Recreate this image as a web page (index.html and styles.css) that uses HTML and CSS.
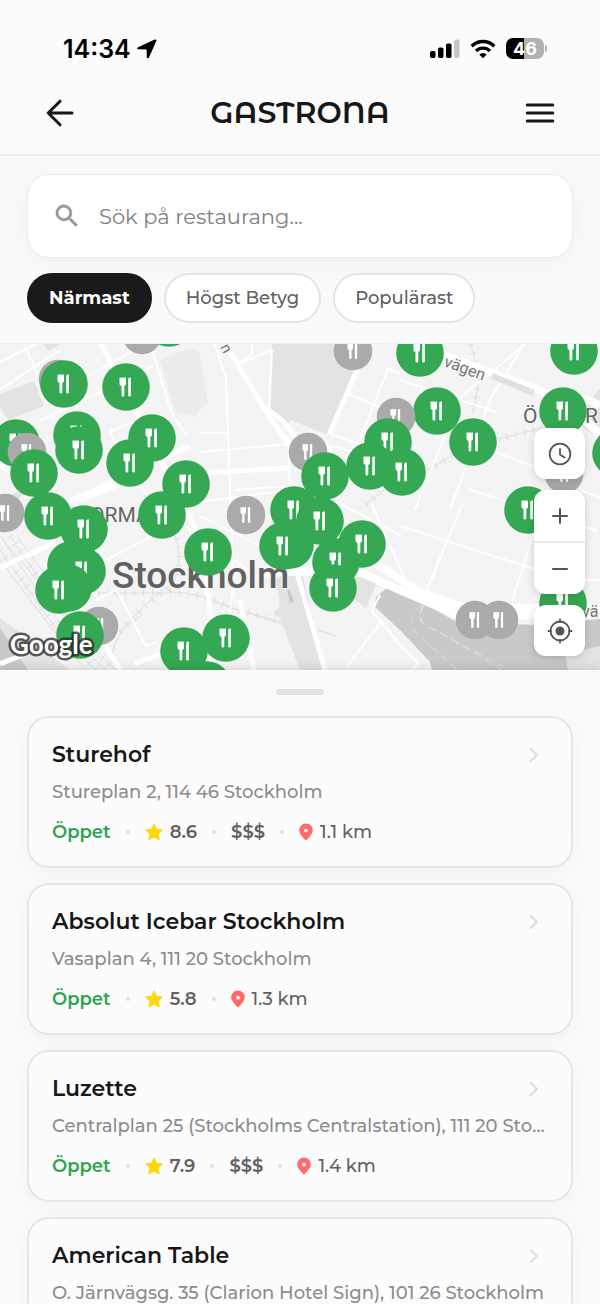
FILE: index.html
```html
<!DOCTYPE html>
<html lang="sv">
<head>
<meta charset="utf-8">
<meta name="viewport" content="width=device-width, initial-scale=1">
<title>Gastrona</title>
<link rel="stylesheet" href="styles.css">
</head>
<body>
<div class="app">
  <div class="status-bar">
    <div class="status-time">14:34
      <svg width="20" height="20" viewBox="0 0 20 20" aria-hidden="true"><path d="M1 8.200 17.800.6c1-.4 1.800.3 1.500 1.300L12 18.500c-.5 1.200-2.100 1-2.200-.3L9.600 10.400 1.500 10.300C0 10.200-.2 8.800 1 8.200z"/></svg>
    </div>
    <div class="status-icons">
      <svg width="30" height="20" viewBox="0 0 30 20" aria-hidden="true"><rect x="0" y="12" width="5.500" height="7" rx="1.700"/><rect x="8" y="8.500" width="5.500" height="10.500" rx="1.700"/><rect x="16" y="4.500" width="5.500" height="14.500" rx="1.700"/><rect x="24" y="0.500" width="5.500" height="18.500" rx="1.700" fill="#c8c8c8"/></svg>
      <svg width="26" height="20" viewBox="0 0 26 20" aria-hidden="true"><g fill="none" stroke="#000" stroke-width="3.400"><path d="M1.700 7.200a16 16 0 0 1 22.600 0"/><path d="M6 12a10 10 0 0 1 14 0"/></g><path d="M13 19.300 9.300 15.500a5.300 5.300 0 0 1 7.400 0z"/></svg>
      <span class="battery">46</span>
    </div>
  </div>

  <header class="header">
    <button class="icon-button" type="button" aria-label="Tillbaka">
      <svg width="30" height="30" viewBox="0 0 30 30" aria-hidden="true"><path d="M27 15H3.500M15 3.200 3.200 15 15 26.800" fill="none" stroke="#171717" stroke-width="3" stroke-linecap="round" stroke-linejoin="round"/></svg>
    </button>
    <h1 class="brand">GASTRONA</h1>
    <button class="icon-button" type="button" aria-label="Meny">
      <svg width="30" height="30" viewBox="0 0 30 30" aria-hidden="true"><path d="M2.300 7h25.500M2.300 15h25.500M2.300 23h25.500" stroke="#171717" stroke-width="3" stroke-linecap="round"/></svg>
    </button>
  </header>

  <section class="filters">
    <label class="search">
      <svg width="30" height="30" viewBox="0 0 24 24" aria-label="Sök"><path fill="#979797" stroke="#979797" stroke-width=".3" d="M15.500 14h-.79l-.28-.27A6.470 6.470 0 0 0 16 9.500 6.500 6.500 0 1 0 9.500 16c1.610 0 3.090-.59 4.230-1.570l.27.28v.79l5 4.990L20.490 19l-4.990-5zm-6 0a4.500 4.500 0 1 1 0-9 4.500 4.500 0 0 1 0 9z"/></svg>
      <input class="search-input" type="text" placeholder="Sök på restaurang...">
    </label>
    <div class="chips">
      <button class="chip chip-active" type="button">Närmast</button>
      <button class="chip" type="button">Högst Betyg</button>
      <button class="chip" type="button">Populärast</button>
    </div>
  </section>

  <section class="map">
    <svg class="map-canvas" viewBox="0 344 600 326" preserveAspectRatio="xMidYMid slice" role="img" aria-label="Karta över Stockholm">
      <defs>
        <g id="cutlery" fill="#fff">
          <path d="M-6.500-9.500h6.500v6.500q0 1.700-1.700 1.700V8.200q0 1.300-1.400 1.300T-4.500 8.200V-1.300Q-6.500-1.300-6.500-3z"/>
          <path d="M2.200-8q0-1.500 1.500-1.500h1.200V8.200q0 1.300-1.300 1.300T2.200 8.200z"/>
          <path d="M-4.700-9.600v1.200M-2-9.600v1.200" stroke="#34a853" stroke-opacity=".5" stroke-width=".7"/>
        </g>
        <g id="open"><circle r="23.800" fill="#34a853"/><use href="#cutlery"/></g>
        <g id="closed"><circle r="19.300" fill="#aaa"/><use href="#cutlery" transform="scale(.85)"/></g>
      </defs>

      <path class="land" d="M0 344h600v326H0z"/>
      <path class="park" d="M272 344h88l-3 26-18 48-9 18-39-16-6 7-19-16 5-5z"/>
      <path class="block" d="m160 360 30-12 10 5 8 51-10 7-1 6-12-3-9 0z"/>
      <path class="park" d="m0 394 34-13 10 25-36 14-8-14zM43 344h18l-13 7z"/>
      <path class="block" d="M200 363q4 8 7 37l-7 2z"/>
      <path class="park" d="m275 574 28 2 22 94h-25l-20-52-7-4 7-8zM352 570l26 10-12 28-14-10zM590 400l10-12v50l-24-14z"/>
      <path class="park" d="M0 500l28-13-18 23zM0 618l70 52H0z"/>
      <path class="water" d="M0 628l28 42H0zM287 590l3 0 4 12-4 1z"/>
      <path class="water" d="M376 597l11-9 13 2 55 31 80 4 65-6v51H432l-2-8-30-32-25-23z"/>
      <path class="park" d="M565 654l35-8v24h-32z"/>

      <g class="rail">
        <path d="M0 550 60 634 96 670M4 542l64 93 38 35M10 536l64 94 42 40M0 560l50 66 36 44M18 538l60 80M0 536 100 655"/>
        <path d="M98 593h70q18-30 7-58M170 592q30 0 60 16l60 16M215 602l70 23M120 632q30-35 55-50M112 655q4-26 30-40"/>
        <path d="M471 344l8 36-6 34M498 439l60-15M428 470l30-18M366 504l26-20M318 630l18 6"/>
      </g>
      <g class="rail rail-wide">
        <path d="M0 550 60 634 96 670M10 536l64 94 42 40M98 593h70q18-30 7-58M170 592q30 0 60 16l60 16M120 632q30-35 55-50"/>
        <path d="M471 344l8 36-6 34M498 439l60-15M428 470l30-18M366 504l26-20"/>
      </g>

      <g class="road thin">
        <path d="M0 390 60 350M0 362l36-18M24 344l28 60M40 421l113-55M60 392l78-44M52 420l20-46M110 431l40-16M110 431l13 28M150 344l22 70 14 20M215 344l11 34 8 220M200 433h30M200 452l90-8M200 502l90-12M234 490l56-4M252 344v10l-14 10 34-14M272 350l-3 60M288 436l2 52M345 475l-17-30 30 8M348 394l32 13M330 434l28 10 30-75 12 4M415 510l45-112 65-54M450 510l40-110 34-56M400 380l96 32M484 448l60 22M468 489l130 42M400 526l150 48M427 590l35-85M512 602l30-95M560 580h40M580 490l20 8M346 668l36-48M122 458l30 44 110 78M104 561l90-47M96 600l20-10 6 10 24 46 10-4 12 20M234 580l-10 80M342 505l58 30M372 505l40 90M280 505l15 60M200 516l60 30M380 595l-8 16 28 34 18 18-6 7"/>
      </g>
      <g class="road">
        <path d="M101 344l100 195 9 70 2 61M0 465l20 14M0 568l56-26M60 506l130-60M80 500l70-28M200 473l88-5M230 352l38 63 35 48M357 370l-28 65M240 600l14 70M297 573l28 97M90 620l30 50M134 664l40-15M0 664l30-12"/>
        <path d="M266 408l18 14 20 27"/>
      </g>
      <g class="road wide">
        <path d="M430 350l60 22 70 26 40 36M262 573l60-2 40 2 40 18 60 26 140-4"/>
        <path d="M360 553l60 39 45 16h135M560 404q20-12 40 2"/>
      </g>
      <path d="m492 376 42 17" stroke="#e0e0e0" stroke-width="6"/>
      <path class="ferry" d="M422 605q-18 14-4 30l42 37M423 605q-8 16 4 21l90 48M424 605q-10 20 12 25l66 40"/>

      <g class="label">
        <text x="112" y="588" font-size="37" font-weight="500" fill="#616161">Stockholm</text>
        <text x="90" y="522" font-size="21">ORMALM</text>
        <text x="523" y="423" font-size="21">Ö</text>
        <text x="585" y="423" font-size="21">R</text>
        <text font-size="16" fill="#777" transform="translate(443 366) rotate(20)">vägen</text>
        <text x="582" y="617" font-size="16" fill="#777">vä</text>
        <text font-size="15" fill="#777" transform="translate(220 347) rotate(62)">n</text>
      </g>

      <g>
        <use href="#open" x="169" y="323"/><use href="#closed" x="142" y="335"/>
        <use href="#closed" x="353" y="351"/><use href="#open" x="420" y="353"/><use href="#open" x="574" y="351"/>
        <use href="#closed" x="58" y="379"/><use href="#open" x="64" y="384"/><use href="#open" x="126" y="387"/>
        <use href="#open" x="437" y="411"/><use href="#open" x="563" y="411"/><use href="#closed" x="396" y="417"/>
        <use href="#open" x="77" y="435"/><use href="#open" x="152" y="438"/><use href="#open" x="388" y="442"/><use href="#open" x="473" y="442"/>
        <use href="#open" x="16" y="443"/><use href="#open" x="79" y="450"/><use href="#closed" x="27" y="452"/><use href="#closed" x="308" y="452"/><use href="#open" x="616" y="453"/>
        <use href="#open" x="130" y="463"/><use href="#open" x="370" y="466"/><use href="#open" x="402" y="472"/><use href="#open" x="34" y="473"/>
        <use href="#closed" x="564" y="474"/><use href="#open" x="325" y="476"/><use href="#open" x="186" y="484"/>
        <use href="#open" x="294" y="510"/><use href="#open" x="528" y="510"/><use href="#closed" x="5" y="513"/><use href="#open" x="162" y="515"/><use href="#closed" x="246" y="515"/>
        <use href="#open" x="48" y="516"/><use href="#open" x="320" y="521"/><use href="#open" x="84" y="529"/><use href="#open" x="362" y="544"/>
        <circle cx="290" cy="545" r="23.800" fill="#34a853"/><use href="#open" x="283" y="546"/><use href="#open" x="208" y="552"/>
        <use href="#open" x="336" y="562"/><circle cx="71" cy="565" r="23.800" fill="#34a853"/><use href="#open" x="82" y="571"/><use href="#open" x="333" y="588"/>
        <circle cx="68" cy="588" r="23.800" fill="#34a853"/><use href="#open" x="59" y="590"/><use href="#open" x="563" y="603"/>
        <use href="#closed" x="475" y="620"/><use href="#closed" x="499" y="620"/><use href="#closed" x="99" y="626"/><use href="#open" x="80" y="635"/>
        <use href="#open" x="226" y="638"/><use href="#open" x="184" y="651"/><use href="#open" x="207" y="685"/>
      </g>
      <text class="map-logo" x="10" y="654">Google</text>
    </svg>

    <div class="map-controls">
      <button class="map-button" type="button" aria-label="Öppettider">
        <svg width="26" height="26" viewBox="0 0 26 26" aria-hidden="true"><g fill="none" stroke="#555" stroke-width="1.800" stroke-linecap="round" stroke-linejoin="round"><circle cx="13" cy="13" r="10.300"/><path d="M13 8v5.500l4.500 3"/></g></svg>
      </button>
      <div class="zoom-group">
        <button class="map-button" type="button" aria-label="Zooma in">
          <svg width="26" height="26" viewBox="0 0 26 26" aria-hidden="true"><path d="M6 13h14M13 6v14" stroke="#555" stroke-width="2" stroke-linecap="round"/></svg>
        </button>
        <button class="map-button" type="button" aria-label="Zooma ut">
          <svg width="26" height="26" viewBox="0 0 26 26" aria-hidden="true"><path d="M6 13h14" stroke="#555" stroke-width="2" stroke-linecap="round"/></svg>
        </button>
      </div>
      <button class="map-button" type="button" aria-label="Min position">
        <svg width="26" height="26" viewBox="0 0 26 26" aria-hidden="true"><g fill="none" stroke="#555" stroke-width="1.800" stroke-linecap="round"><circle cx="13" cy="13" r="9.500"/><path d="M13 1.500V4M13 22v2.500M1.500 13H4M22 13h2.500"/></g><circle cx="13" cy="13" r="4.500" fill="#555"/></svg>
      </button>
    </div>
  </section>

  <main class="sheet">
    <div class="handle"></div>
    <svg class="symbols" aria-hidden="true">
      <symbol id="star" viewBox="0 0 18 18"><path fill="#ffd60a" stroke="#ffd60a" stroke-linejoin="round" d="m9 1 2.500 5.300 5.900.7-4.400 4 1.200 5.900L9 14l-5.200 2.900L5 11 .6 7l5.900-.7z"/></symbol>
      <symbol id="pin" viewBox="0 0 14 18"><path fill="#ff6b6b" fill-rule="evenodd" d="M7 .5a6.800 6.800 0 0 0-6.800 6.800C.2 11.800 7 17.600 7 17.600s6.800-5.800 6.800-10.300A6.800 6.800 0 0 0 7 .5zm0 5.200a1.900 1.900 0 1 1 0 3.800 1.900 1.900 0 0 1 0-3.800z"/></symbol>
      <symbol id="chevron" viewBox="0 0 10 16"><path d="m1.700 2 6.300 6-6.300 6" fill="none" stroke="#dedede" stroke-width="2.200" stroke-linecap="round" stroke-linejoin="round"/></symbol>
    </svg>

    <article class="card">
      <div class="card-top"><h2 class="name">Sturehof</h2><svg class="chevron"><use href="#chevron"/></svg></div>
      <p class="address">Stureplan 2, 114 46 Stockholm</p>
      <div class="meta"><span class="status-open">Öppet</span><i class="dot"></i><span class="rating"><svg class="star"><use href="#star"/></svg>8.6</span><i class="dot"></i><span class="price">$$$</span><i class="dot"></i><span class="distance"><svg class="pin"><use href="#pin"/></svg>1.1 km</span></div>
    </article>
    <article class="card">
      <div class="card-top"><h2 class="name">Absolut Icebar Stockholm</h2><svg class="chevron"><use href="#chevron"/></svg></div>
      <p class="address">Vasaplan 4, 111 20 Stockholm</p>
      <div class="meta"><span class="status-open">Öppet</span><i class="dot"></i><span class="rating"><svg class="star"><use href="#star"/></svg>5.8</span><i class="dot"></i><span class="distance"><svg class="pin"><use href="#pin"/></svg>1.3 km</span></div>
    </article>
    <article class="card">
      <div class="card-top"><h2 class="name">Luzette</h2><svg class="chevron"><use href="#chevron"/></svg></div>
      <p class="address">Centralplan 25 (Stockholms Centralstation), 111 20 Stockholm</p>
      <div class="meta"><span class="status-open">Öppet</span><i class="dot"></i><span class="rating"><svg class="star"><use href="#star"/></svg>7.9</span><i class="dot"></i><span class="price">$$$</span><i class="dot"></i><span class="distance"><svg class="pin"><use href="#pin"/></svg>1.4 km</span></div>
    </article>
    <article class="card">
      <div class="card-top"><h2 class="name">American Table</h2><svg class="chevron"><use href="#chevron"/></svg></div>
      <p class="address">O. Järnvägsg. 35 (Clarion Hotel Sign), 101 26 Stockholm</p>
    </article>
  </main>
</div>
</body>
</html>
```
FILE: styles.css
```css
* { box-sizing: border-box; }
body {
  margin: 0;
  background: #fbfbfb;
  color: #171717;
  font-family: Montserrat, Inter, "Liberation Sans", sans-serif;
}
button { font: inherit; padding: 0; border: 0; cursor: pointer; }
h1, h2, p { margin: 0; }
svg { display: block; flex: none; }

.app { display: flex; flex-direction: column; height: 100vh; overflow: hidden; }

.status-bar {
  flex: none;
  display: flex;
  align-items: center;
  justify-content: space-between;
  height: 72px;
  padding: 25px 56px 0 63px;
  color: #000;
  font-family: Inter, sans-serif;
}
.status-time { display: flex; align-items: center; gap: 6px; font-size: 25px; font-weight: 600; line-height: 30px; }
.status-icons { display: flex; align-items: center; gap: 10px; }
.battery {
  position: relative;
  width: 38px;
  border-radius: 7px;
  background: linear-gradient(90deg, #000 47%, #b1b1b1 47%);
  color: #fff;
  font-size: 18px;
  font-weight: 700;
  line-height: 21px;
  text-align: center;
}
.battery::after {
  content: "";
  position: absolute;
  left: 39px;
  top: 7px;
  width: 2px;
  height: 7px;
  border-radius: 0 3px 3px 0;
  background: #b1b1b1;
}

.header {
  flex: none;
  display: flex;
  align-items: center;
  justify-content: space-between;
  height: 84px;
  padding: 0 45px;
  border-bottom: 2px solid #f0f0f0;
}
.icon-button { background: none; }
.brand { font-family: "Montserrat Alternates", Montserrat, Inter, sans-serif; font-size: 30px; font-weight: 600; line-height: 40px; }

.filters { flex: none; padding: 18px 27px 20px; background: #fafafa; border-bottom: 1px solid #ececec; }
.search {
  display: flex;
  align-items: center;
  gap: 17px;
  height: 84px;
  padding: 0 24px;
  border: 1px solid #ebebeb;
  border-radius: 22px;
  background: #fff;
  box-shadow: 0 4px 22px rgba(0, 0, 0, .04);
}
.search-input { flex: 1; min-width: 0; border: 0; padding: 2px 0 0; outline: 0; background: none; font: inherit; font-size: 21px; line-height: 30px; color: #171717; }
.search-input::placeholder { color: #808080; opacity: 1; }
.chips { display: flex; gap: 12px; margin-top: 15px; }
.chip { height: 50px; padding: 0 20px; border: 2px solid #e5e5e5; border-radius: 25px; background: #fff; color: #616161; font-size: 18px; font-weight: 500; }
.chip-active { border-color: #1a1a1a; background: #1a1a1a; color: #fff; font-weight: 700; }

.map { flex: none; position: relative; }
.map-canvas { width: 100%; height: 326px; }
.land { fill: #f4f4f4; }
.park { fill: #e3e3e3; }
.block { fill: #ececec; }
.water { fill: #c9c9c9; }
.rail { fill: none; stroke: #dfdfdf; stroke-width: 1; }
.rail-wide { stroke-width: 7; stroke-dasharray: 1 8; }
.road { fill: none; stroke: #fff; stroke-width: 5; }
.thin { stroke-width: 2; }
.wide { stroke-width: 8; }
.ferry { fill: none; stroke: #dedede; stroke-width: 1; stroke-dasharray: 9 4; }
.label { font-family: Roboto, sans-serif; fill: #666; stroke: #f4f4f4; stroke-width: 2px; paint-order: stroke; }
.map-logo { font-family: Lato, sans-serif; font-size: 26px; font-weight: 700; fill: #fff; stroke: rgba(40, 40, 40, .75); stroke-width: 5px; stroke-linejoin: round; paint-order: stroke; }
.map-controls { position: absolute; top: 84px; right: 15px; display: flex; flex-direction: column; gap: 11px; }
.map-button { display: grid; place-items: center; width: 51px; height: 51px; border-radius: 12px; background: #fff; box-shadow: 0 2px 8px rgba(0, 0, 0, .16); }
.zoom-group { display: grid; gap: 2px; border-radius: 12px; overflow: hidden; background: #ebebeb; box-shadow: 0 2px 8px rgba(0, 0, 0, .16); }
.zoom-group .map-button { border-radius: 0; box-shadow: none; }

.sheet {
  position: relative;
  flex: 1;
  min-height: 0;
  display: flex;
  flex-direction: column;
  gap: 15px;
  padding: 19px 27px;
  overflow-y: auto;
  scrollbar-width: none;
  background: #fbfbfb;
  box-shadow: 0 0 10px rgba(0, 0, 0, .16);
}
.handle { flex: none; align-self: center; width: 48px; height: 6px; margin-bottom: 6px; border-radius: 3px; background: #e2e2e2; }
.symbols { position: absolute; width: 0; height: 0; }
.card { flex: none; padding: 20px 24px 20px 23px; border: 2px solid #e6e6e6; border-radius: 22px; background: #fcfcfc; box-shadow: 0 4px 20px rgba(0, 0, 0, .04); }
.card-top { display: flex; align-items: center; justify-content: space-between; padding-right: 8px; }
.name { font-size: 22px; font-weight: 600; line-height: 34px; }
.chevron { width: 10px; height: 16px; }
.address { margin-top: 6px; color: #8c8c8c; font-size: 18px; font-weight: 500; line-height: 28px; white-space: nowrap; overflow: hidden; text-overflow: ellipsis; }
.meta { display: flex; align-items: center; gap: 15px; margin-top: 12px; color: #616161; font-size: 18px; line-height: 28px; }
.status-open { color: #2ea44f; font-weight: 600; }
.dot { width: 4px; height: 4px; border-radius: 2px; background: #e2e2e2; }
.rating { display: flex; align-items: center; gap: 7px; font-weight: 600; }
.price { font-weight: 600; }
.distance { display: flex; align-items: center; gap: 7px; font-weight: 500; }
.star { width: 18px; height: 18px; }
.pin { width: 14px; height: 18px; }
```
